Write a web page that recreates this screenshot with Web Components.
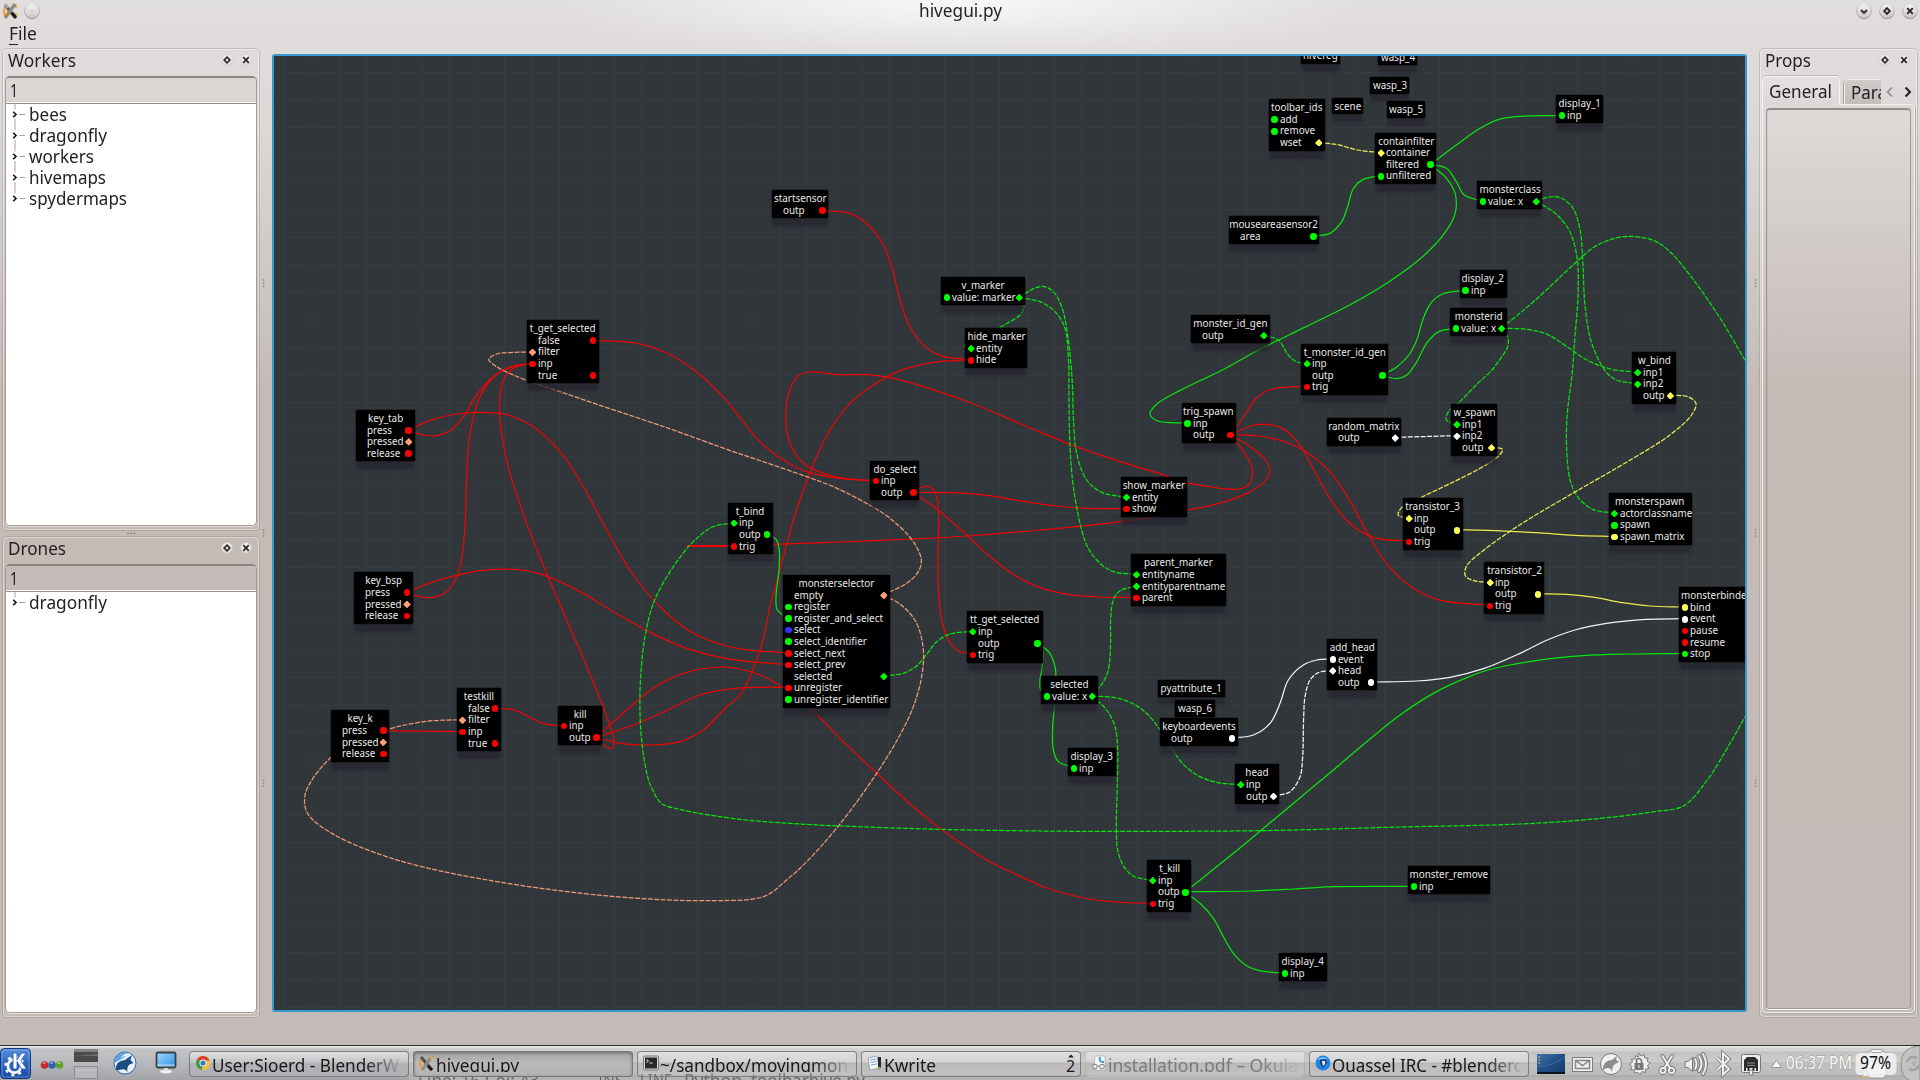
<!DOCTYPE html>
<html lang="en">
<head>
<meta charset="utf-8">
<title>hivegui.py</title>
<style>
html,body{margin:0;height:100%;overflow:hidden}
body{font-family:"Noto Sans","Open Sans",sans-serif;font-size:17.4px;color:#242120}
</style>
</head>
<body>
<hive-window></hive-window>
<script>
const define=(name,css,html,setup)=>customElements.define(name,class extends HTMLElement{
  connectedCallback(){
    if(this.shadowRoot)return;
    const root=this.attachShadow({mode:'open'});
    root.innerHTML=`<style>${css}</style>`+(typeof html==='function'?html(this):html);
    if(setup)setup(this,root);
  }
});

/* Text squeezed or stretched to a given advance width */
define('fit-text',
`:host{display:inline-block;white-space:nowrap;flex:none;line-height:1.2}
 span{display:inline-block;transform-origin:0 50%}`,
`<span><slot></slot></span>`,
(el,root)=>{
  const w=+el.getAttribute('w'),s=root.querySelector('span');
  const n=s.getBoundingClientRect().width;
  if(n)s.style.transform=`scaleX(${w/n})`;
  el.style.width=w+'px';
});

/* Round window and dock buttons */
const glyphs={
  down:'<path d="M6 8l3 3 3-3"/>',
  diamond:'<path d="M9 6.2L11.8 9 9 11.8 6.2 9z"/>',
  close:'<path d="M6.2 6.2l5.6 5.6M11.8 6.2l-5.6 5.6"/>',
  dot:'<path d="M8.6 9h.8" stroke-width="1" stroke="#777"/>'
};
define('round-button',
`:host{display:block;width:18px;height:18px;flex:none} svg{display:block}`,
el=>{
  const big=el.hasAttribute('big');
  return `<svg width="18" height="18" viewBox="0 0 18 18"><defs><linearGradient id="g" x1="0" y1="0" x2="0" y2="1"><stop offset="0" stop-color="#f6f5f4"/><stop offset="1" stop-color="${big?'#c9c5c3':'#dcd8d6'}"/></linearGradient></defs>
  ${big?'<circle cx="9" cy="9.6" r="7.6" fill="#8e8987" opacity=".75"/><circle cx="9" cy="9" r="7" fill="url(#g)"/>':'<circle cx="9" cy="9" r="5.4" fill="url(#g)" stroke="#cdc8c6" stroke-width=".6"/>'}
  <g fill="none" stroke="#2c2928" stroke-width="${big?1.9:1.7}">${glyphs[el.getAttribute('kind')]}</g></svg>`;
});

define('tool-icon',`:host{display:block;flex:none}svg{display:block}`,
`<svg width="15" height="16" viewBox="0 0 15 16"><path d="M2 5Q0 8 2 13" stroke="#f59a3c" stroke-width="2" fill="none"/><path d="M11 2q3 0 2 3M12 10l2 3" stroke="#e8b04a" stroke-width="2.4" fill="none"/><path d="M2 2L12 14" stroke="#55524a" stroke-width="3.4"/><path d="M12 1L2 15" stroke="#8b8a85" stroke-width="3.4"/><path d="M2 1l3 4" stroke="#aaa" stroke-width="3"/><path d="M3 13l2-3" stroke="#b78b25" stroke-width="2.6"/><path d="M9 10l4 5" stroke="#1d1c18" stroke-width="3"/></svg>`);

define('title-bar',
`:host{display:grid;grid-template-columns:1fr auto 1fr;align-items:center;height:21px;padding:0 1px 0 3px}
 .l,.r{display:flex;align-items:center}.l{gap:5px}.r{justify-content:flex-end;gap:5px}
 fit-text{margin-left:-1px}`,
`<div class="l"><tool-icon></tool-icon><round-button big kind="dot"></round-button></div>
 <fit-text w="83">hivegui.py</fit-text>
 <div class="r"><round-button big kind="down"></round-button><round-button big kind="diamond"></round-button><round-button big kind="close"></round-button></div>`);

define('menu-bar',
`:host{display:flex;height:27px;padding:0 0 2px 9px;align-items:center;box-sizing:border-box}
 u{text-decoration:none;box-shadow:0 -1px 0 #242120 inset;display:inline-block;height:22px}`,
`<fit-text w="28"><u>F</u>ile</fit-text>`);

/* Dock: titled frame */
define('dock-panel',
`:host{display:flex;flex-direction:column;box-sizing:border-box;border:1px solid rgba(120,110,105,.28);border-radius:5px;box-shadow:inset 0 0 0 1px rgba(255,255,255,.4);padding:0 2px 4px;min-width:0}
 header{display:flex;align-items:center;height:27px;padding:0 2px 0 3px;flex:none;box-sizing:border-box}
 fit-text{margin-top:-4px}
 .sp{flex:1}round-button{margin-left:1px;margin-top:-5px}`,
el=>`<header><fit-text w="${el.getAttribute('w')}">${el.getAttribute('label')}</fit-text><div class="sp"></div><round-button kind="diamond"></round-button><round-button kind="close"></round-button></header><slot></slot>`);

define('tree-view',
`:host{display:flex;flex-direction:column;flex:1;border:1px solid #a29b97;border-top:2px solid #8d8784;border-radius:5px;background:#fff;overflow:hidden;box-sizing:border-box;box-shadow:0 1px 0 #e4e0de}
 .h{height:24.5px;flex:none;background:var(--head);padding-left:4px;border-bottom:1px solid #96908d;box-shadow:inset 0 -1px 0 #fff;display:flex;align-items:center}
 .rows{padding-left:4px}
 .r{display:flex;align-items:center;height:21px}
 svg{flex:none;margin-right:4px}`,
el=>`<div class="h"><fit-text w="8">1</fit-text></div><div class="rows">`+el.getAttribute('items').split(',').map((t,i,a)=>{
  const [n,w]=t.split(':');
  return `<div class="r"><svg width="15" height="21" viewBox="0 0 15 21"><path d="M5 0V5.500M9.500 10.500H15${i<a.length-1?'M5 15V21':''}" stroke="#a5a19f" fill="none"/><path d="M3.200 7.700L6 10.500 3.200 13.300" stroke="#111" stroke-width="1.600" fill="none"/></svg><fit-text w="${w}">${n}</fit-text></div>`}).join('')+`</div>`);

define('split-grip',
`:host{display:flex;align-items:center;justify-content:center;flex:none}svg{display:block}`,
el=>el.hasAttribute('h')
?`<svg width="10" height="3"><path d="M1 1.500h2M4 1.500h2M7 1.500h2" stroke="#8d8683" stroke-width="1.500"/></svg>`
:`<svg width="3" height="10"><path d="M1.500 1v2M1.500 4v2M1.500 7v2" stroke="#9b9592" stroke-width="1.500"/></svg>`);

define('props-tabs',
`:host{display:flex;flex-direction:column;flex:1}
 .t{display:flex;height:28px;flex:none;align-items:flex-end}
 .a{width:78px;height:29px;box-sizing:border-box;border:1px solid #f6f5f4;border-bottom:0;border-radius:5px 5px 0 0;background:linear-gradient(#e4e2e0,#dbd8d6);display:flex;align-items:center;justify-content:center;margin-bottom:-1px;position:relative;z-index:1;box-shadow:0 -1px 0 #b9b3b0;flex:none}
 .a fit-text{margin-left:-1px}
 .b{width:37px;height:25px;margin-left:4px;overflow:hidden;border:1px solid #f0eeed;border-right:0;border-bottom:0;border-radius:5px 0 0 0;background:linear-gradient(#d0cac8,#c4bebb);display:flex;align-items:center;padding-left:6px;box-sizing:border-box;box-shadow:-1px 0 0 #a8a29f;flex:none}
 svg{margin-left:4px;margin-bottom:5px;flex:none}
 .p{flex:1;border:1px solid #f3f1f0;border-radius:0 4px 4px 4px;padding:3px;box-shadow:1px 1px 0 #b1aaa7}
 .q{height:100%;box-sizing:border-box;border:1px solid #a09996;border-top:2px solid #938d8a;border-radius:4px;box-shadow:inset 1px 0 0 rgba(0,0,0,.05),0 1px 0 #fff}`,
`<div class="t"><div class="a"><fit-text w="63">General</fit-text></div><div class="b"><fit-text w="36">Para</fit-text></div><svg width="28" height="14"><path d="M7 2.500L2.500 7 7 11.500" stroke="#8f8a87" stroke-width="1.600" fill="none"/><path d="M20.500 2.500L25 7 20.500 11.500" stroke="#1c1a19" stroke-width="1.900" fill="none"/></svg></div><div class="p"><div class="q"></div></div>`);

/* Graph node */
define('hive-node',
`:host{display:block;position:absolute;box-sizing:border-box;background:#000;border-radius:1px;color:#e9e9e9;font-size:11px;box-shadow:0 0 0 .5px rgba(0,0,0,.5),0 9px 3px -1px rgba(37,36,46,.75);padding-top:3px;line-height:11.600px;white-space:nowrap}
 .t{display:flex;justify-content:center;height:11.600px}
 .t span{display:block;transform:translateY(-.6px) scaleX(var(--sq));transform-origin:50% 50%}
 .r{display:flex;align-items:center;height:11.600px;padding:0 2.500px;gap:2px;position:relative}
 .r span{transform:translateY(-.6px) scaleX(var(--sq));transform-origin:0 50%;width:0;flex:1}
 i{width:6.600px;height:6.600px;border-radius:50%;background:var(--c);flex:none}
 i.d{border-radius:0;clip-path:polygon(50% -4%,104% 50%,50% 104%,-4% 50%);width:7.200px;height:7.200px;margin:0 -.3px}
 i.n{background:none}`,
el=>{
  const col={r:'#f00',g:'#0f0',o:'#ffa07a',y:'#ff5',w:'#fff',b:'#33f'};
  const rows=(el.getAttribute('ports')||'').split(',').filter(Boolean).map(p=>{
    const [spec,...rest]=p.split('|');
    const dots=spec.split('.').map(s=>s==='-'?'<i class="n"></i>':`<i class="${s[1]==='d'?'d':''}" style="--c:${col[s[0]]}"></i>`);
    return `<div class="r">${dots[0]}<span>${rest[0]}</span>${dots[1]||''}</div>`}).join('');
  return `<div class="t"><span>${el.getAttribute('label')}</span></div>${rows}`;
},
el=>{
  const n=(el.getAttribute('ports')||'').split(',').filter(Boolean).length;
  const [x,y,w]=el.getAttribute('box').split(' ');
  el.style.cssText=`left:${x-274}px;top:${y-56}px;width:${w}px;height:${16.5+11.6*n}px`;
});

const N=[
['hivereg','1301 47.1 38.8',''],['wasp_4','1378.4 48.800 39',''],['wasp_3','1370.2 77 38.8',''],['scene','1332.2 97.7 30.8',''],['wasp_5','1386.7 101 38.8',''],
['toolbar_ids','1268.5 99.3 56.2','g.-|add,g.-|remove,-.yd|wset'],
['containfilter','1375.3 132.7 61.2','yd.-|container,-.g|filtered,g.-|unfiltered'],
['display_1','1556.4 95.3 47','g.-|inp'],
['monsterclass','1477.3 181.3 64.8','g.gd|value: x'],
['mouseareasensor2','1229 216.3 90','-.g|area'],
['display_2','1459.5 270 47','g.-|inp'],
['monsterid','1450.4 308.3 57','g.gd|value: x'],
['monster_id_gen','1191.4 315.3 78.3','-.gd|outp'],
['t_monster_id_gen','1301.3 343.5 87','gd.-|inp,-.g|outp,r.-|trig'],
['trig_spawn','1181.5 403 54.6','g.-|inp,-.r|outp'],
['w_bind','1631.9 352.3 44.3','gd.-|inp1,gd.-|inp2,-.yd|outp'],
['w_spawn','1451.2 404.3 46.2','gd.-|inp1,wd.-|inp2,-.yd|outp'],
['random_matrix','1327 417.7 74','-.wd|outp'],
['transistor_3','1403.3 498.3 59.3','yd.-|inp,-.y|outp,r.-|trig'],
['monsterspawn','1608.6 493.3 83','gd.-|actorclassname,g.-|spawn,y.-|spawn_matrix'],
['transistor_2','1484.4 562.3 59.3','yd.-|inp,-.y|outp,r.-|trig'],
['monsterbinder','1679 587.3 73','y.-|bind,w.-|event,r.-|pause,r.-|resume,g.-|stop'],
['startsensor','771.7 190.3 56.6','-.r|outp'],
['v_marker','941 277.3 84','g.gd|value: marker'],
['hide_marker','965.3 328.3 61.6','gd.-|entity,r.-|hide'],
['t_get_selected','526.7 320.3 72','-.r|false,od.-|filter,r.-|inp,-.r|true'],
['key_tab','356 410 58.5','-.r|press,-.od|pressed,-.r|release'],
['key_bsp','354.3 572.4 58.5','-.r|press,-.od|pressed,-.r|release'],
['key_k','331 710.4 58','-.r|press,-.od|pressed,-.r|release'],
['testkill','456.7 688.3 44.3','-.r|false,od.-|filter,r.-|inp,-.r|true'],
['kill','558 705.7 44.3','r.-|inp,-.r|outp'],
['t_bind','728.3 502.8 44.3','gd.-|inp,-.g|outp,r.-|trig'],
['do_select','870.3 460.6 49','r.-|inp,-.r|outp'],
['monsterselector','782.7 575 107','-.od|empty,g.-|register,g.-|register_and_select,b.-|select,g.-|select_identifier,r.-|select_next,r.-|select_prev,-.gd|selected,r.-|unregister,g.-|unregister_identifier'],
['show_marker','1120.7 477 66','gd.-|entity,r.-|show'],
['parent_marker','1130.7 554.4 95.3','gd.-|entityname,gd.-|entityparentname,r.-|parent'],
['tt_get_selected','967 611.4 76','gd.-|inp,-.g|outp,r.-|trig'],
['selected','1041.3 676 56.7','g.gd|value: x'],
['display_3','1068.3 748 47.3','g.-|inp'],
['pyattribute_1','1158 680 67',''],['wasp_6','1175.4 700.3 39.2',''],
['keyboardevents','1160.3 718 77.7','-.w|outp'],
['head','1235 764.4 44.3','gd.-|inp,-.wd|outp'],
['add_head','1327 639 49.7','w.-|event,wd.-|head,-.w|outp'],
['t_kill','1147 860.3 44.3','gd.-|inp,-.g|outp,r.-|trig'],
['display_4','1279 953.4 47.6','g.-|inp'],
['monster_remove','1408 866 82','g.-|inp']];

/* Wire points live in scene tiles; a letter switches to that tile's origin and scale */
const T={A:[300,280,3,3],B:[740,460,3,3],C:[1140,50,2.529,3],D:[1140,340,2.529,3],E:[1000,600,3,3],F:[740,170,3,3],G:[0,0,.81667,.81667]};
const W=[
'r A 879,181 1000,188 1100,219 1190,276 1270,352 F 0,742 50,805 110,857 200,905 300,925 400,932',
'r A 325,450 370,465 410,467 450,452 490,410 530,345 580,290 630,262 697,251',
'r A 325,450 400,418 470,402 540,397 620,404 700,440 780,515 850,620 920,750 1000,885 1090,990 1180,1060 1280,1098 1360,1112 1440,1117 B 145,578',
'r A 320,937 370,952 410,950 450,925 480,860 495,740 500,590 510,460 540,350 590,283 640,258 697,251',
'r A 320,937 400,905 470,886 540,872 610,867 680,872 750,892 840,935 940,995 1050,1057 1160,1105 1280,1136 1440,1152 B 145,613',
'r A 889,1372 915,1398 935,1406 942,1395 935,1355 890,1230 800,1020 740,880 680,730 630,580 602,440 600,350 615,290 650,260 697,251',
'r A 889,1372 980,1290 1060,1225 1150,1180 1260,1161 B 0,627 60,645 125,680 207,741 300,835 410,940 520,1040 620,1120 740,1200 860,1258 E 140,864 250,894 350,906 458,911',
'r A 889,1372 1000,1335 1100,1292 1200,1245 1300,1226 B 60,682 145,682',
'r A 889,1372 960,1390 1050,1395 1140,1385 1210,1350 1280,1280 B 0,705 60,570 90,440 125,310 160,180 190,90 225,0 F 270,780 330,700 400,645 480,602 580,577 693,569',
'r D 229,284 262,335 282,380 283,415 268,440 235,448 180,441 118,428 F 1280,918 1150,878 1000,827 850,765 700,702 550,650 445,622 380,614 300,614 210,606 175,617 150,660 137,740 150,820 190,880 250,910 320,926 400,932',
'r D 229,284 285,325 318,360 328,392 315,425 270,460 200,490 118,511 B 1235,172 1100,190 900,210 685,228 515,237 300,246 98,253 60,255',
'R A 1160,798 1303,798',
'r B 519,97 640,98 740,106 850,124 950,138 1050,145 1160,146',
'r B 519,97 550,80 575,84 590,110 596,180 594,300 596,400 605,480 625,540 655,572 697,583',
'r B 519,97 600,155 680,225 750,290 820,343 900,383 990,404 1080,411 1190,412',
'r F 247,122 330,130 385,165 430,225 455,290 475,370 500,450 545,520 600,556 693,569',
'g- F 837,383 885,354 912,350 940,365 965,410 985,510 997,640 1000,740 1010,850 1040,930 1085,967 1160,982',
'g- F 837,383 900,395 945,425 975,475 985,560 987,700 990,830 1000,950 B 1025,210 1045,265 1080,310 1120,335 1190,343',
'g- F 837,383 852,410 840,435 810,455 775,474 700,505 673,527 693,535',
'g- B 430,647 490,640 530,618 560,583 590,545 630,522 697,514',
'o- B 430,404 500,370 535,335 544,300 520,245 450,175 370,125 280,80 200,50 55,0 A 1300,515 1100,443 900,376 780,335 710,312 640,285 590,260 566,238 590,222 640,217 697,216',
'o- B 430,404 490,440 530,490 550,570 545,650 520,740 480,825 410,940 300,1092 200,1205 142,1258 G 624,732 580,735.500 500,732 400,719 320,701 270,680 251,664 249,650 A 37,1498 93,1432 160,1385 267,1347 340,1330 400,1322 487,1319',
'r A 249,1352 487,1355',
'r A 585,1285 640,1289 690,1312 730,1331 792,1337',
'g B 80,223 108,238 118,270 116,340 108,410 112,450 145,475',
'g- A 1303,729 1240,740 1180,785 1120,860 1062,965 1035,1070 1022,1190 1020,1300 1027,1400 1045,1498 G 533,645 540,656 555,661 B 0,1078 150,1090 300,1098 600,1108 900,1113 E 300,694 780,692 1200,681 1560,672 G 1300,669 1350,663 1375,658 1395,636 1410,612 1426,584',
'g- C 914,835 1000,750 1100,640 1150,590 1200,565 1243,559 1300,572 1340,605 1400,690 1470,810 1536,943',
'g B 891,548 908,570 905,630 900,660 902,690 921,708',
'g B 891,548 930,580 945,620 948,650 944,735 938,800 940,870 955,905 1002,923',
'g- B 1056,708 1090,665 1105,630 1112,550 1112,480 1120,420 1140,392 1190,378',
'g- E 276,288 350,294 400,312 440,340 482,392 512,440 550,493 600,530 650,547 722,554',
'g- E 276,288 320,330 345,380 353,450 352,550 349,680 353,750 372,800 400,828 458,842',
'w E 696,414 760,405 810,370 840,310 865,240 910,195 950,180 1000,177',
'w- E 820,588 870,575 900,530 908,470 911,350 915,290 930,240 955,218 1000,212',
'w E 1111,246 1250,243 1350,232 1450,206 1560,160 D 1030,900 1100,870 1180,850 1280,838 1377,836',
'g E 555,876 700,760 850,635 1000,510 1100,425 1200,345 1300,280 1400,233 D 880,990 1000,962 1120,947 1240,942 1377,940',
'g E 555,875 750,873 880,867 1000,860 1241,859',
'g E 555,876 600,910 640,955 670,1010 700,1060 740,1097 780,1112 855,1120',
'y- C 452,278 500,284 550,300 610,308',
'g C 438,558 480,550 510,515 525,470 540,415 565,388 610,377',
'g C 735,343 800,285 860,235 900,211 950,200 1068,196',
'g C 735,343 775,355 800,395 820,435 869,454',
'g C 735,343 775,385 797,430 797,490 770,550 710,625 630,695 530,765 420,830 300,900 208,960 D 100,152 45,190 25,222 45,243 119,249',
'g- C 1002,454 1035,441 1065,444 1095,475 1113,540 1120,640 1125,760 1140,870 D 1175,90 1205,120 1258,131',
'g- C 1002,454 1050,490 1085,540 1105,620 1108,730 1100,860 D 1093,100 1080,230 1080,350 1090,430 1110,475 1145,508 1200,519',
'g- C 914,835 980,838 1030,853 1080,890 1130,930 1190,957 D 1258,97',
'g- C 914,835 930,860 930,890 915,920 D 890,90 850,135 803,192 780,215 775,240 801,253',
'g- C 313,857 350,870 375,915 395,935 423,941',
'g D 612,106 650,80 680,45 700,0 C 715,810 735,760 765,732 823,721',
'g D 612,106 650,116 675,105 700,65 C 725,880 755,845 800,835',
'r D 229,284 265,225 290,180 320,153 360,142 423,140',
'r D 229,284 280,258 320,253 360,265 400,308 440,390 480,475 530,550 590,592 680,604',
'r D 229,284 300,288 360,303 420,335 480,395 530,480 573,575 620,665 680,735 750,778 885,796',
'w- D 645,292 801,287',
'y- D 889,322 917,328 905,350 860,385 780,433 710,473 660,505 653,525 680,535',
'y D 801,569 880,571 1000,578 1100,586 1200,589',
'y- D 1340,166 1385,170 1406,190 1395,225 1340,285 1240,360 1100,456 960,555 870,630 825,680 823,708 845,722 885,727',
'y D 1006,761 1080,763 1150,772 1220,788 1290,798 1377,801'];

/* Centripetal Catmull-Rom spline through the wire's points */
function spline(p){
  const f=v=>v.toFixed(2),n=p.length;
  let d=`M${f(p[0][0])} ${f(p[0][1])}`;
  const D=(a,b)=>Math.max(Math.sqrt(Math.hypot(a[0]-b[0],a[1]-b[1])),1e-3);
  for(let i=0;i<n-1;i++){
    const a=p[i-1]||p[i],b=p[i],c=p[i+1],e=p[i+2]||c;
    const d1=D(a,b),d2=D(b,c),d3=D(c,e);
    const c1=[0,1].map(k=>i===0?b[k]+(c[k]-b[k])/3:(d1*d1*c[k]-d2*d2*a[k]+(2*d1*d1+3*d1*d2+d2*d2)*b[k])/(3*d1*(d1+d2)));
    const c2=[0,1].map(k=>i===n-2?c[k]-(c[k]-b[k])/3:(d3*d3*b[k]-d2*d2*e[k]+(2*d3*d3+3*d3*d2+d2*d2)*c[k])/(3*d3*(d3+d2)));
    d+=`C${f(c1[0])} ${f(c1[1])} ${f(c2[0])} ${f(c2[1])} ${f(c[0])} ${f(c[1])}`;
  }
  return d;
}
function wire(s){
  const [k,...tok]=s.split(' ');let t;const pts=[];
  for(const q of tok){if(T[q]){t=T[q];continue}const [x,y]=q.split(',').map(Number);pts.push([t[0]+x/t[2],t[1]+y/t[3]])}
  const c={r:'#ee0404',R:'#ee0404',g:'#08e40c',o:'#ef997a',y:'#ecec50',w:'#f4f4f4'}[k[0]];
  return `<path d="${spline(pts)}" stroke="${c}"${k[0]==='R'?' stroke-width="2"':''}${k[1]?' stroke-dasharray="5 1.4"':''}/>`;
}

define('node-canvas',
`:host{display:block;position:relative;box-sizing:border-box;border:2px solid #3a97c9;border-top-color:#3a9bd0;border-radius:3px;overflow:hidden;--sq:.895;
 background:#31363a;
 background-image:linear-gradient(90deg,#373c40 0 1px,transparent 1px),linear-gradient(#373c40 0 1px,transparent 1px);
 background-size:27.500px 27.500px;background-position:10px 16px;flex:none;box-shadow:inset 0 0 2px #1c4964}
 svg{display:block}`,
`<svg width="1471" height="956" viewBox="274 56 1471 956" fill="none" stroke-width="1.25">${W.map(wire).join('')}</svg>`
+N.map(([l,b,p])=>`<hive-node label="${l}" box="${b}" ports="${p}"></hive-node>`).join(''));

/* Taskbar */
const appIcons={
 chrome:'<circle cx="8" cy="8" r="7" fill="#f2c531"/><path d="M8 8L1.900 4.500A7 7 0 0 1 14.600 5.500H8z" fill="#d8402e"/><path d="M8 8L1.900 4.500A7 7 0 0 0 7 15z" fill="#3c9c4a"/><circle cx="8" cy="8" r="3.500" fill="#f4f4f4"/><circle cx="8" cy="8" r="2.600" fill="#3b78c9"/>',
 tools:'<path d="M2 5Q0 8 2 13" stroke="#f59a3c" stroke-width="2" fill="none"/><path d="M2 2L13 15" stroke="#55524a" stroke-width="3"/><path d="M13 1L3 15" stroke="#8b8a85" stroke-width="3"/><path d="M9 11l4 4" stroke="#1d1c18" stroke-width="3"/><path d="M11 2q3 0 2 3" stroke="#e8b04a" stroke-width="2" fill="none"/>',
 term:'<rect x=".5" y="1" width="15" height="14" rx="1" fill="#ddd" stroke="#777"/><rect x="2" y="2.500" width="12" height="11" fill="#26292b"/><path d="M3.500 4.500l2 1.500-2 1.500M6.500 8h3" stroke="#eee" fill="none"/>',
 write:'<path d="M1 3l9-2 2 12-9 2z" fill="#f5f8fb" stroke="#8a97a3" stroke-width=".8"/><path d="M3 5l6-1M3.500 7.500l6-1M4 10l6-1" stroke="#79a6d2"/><path d="M11 2h3v10l-1.500 3-1.500-3z" fill="#2a2a2a"/><path d="M11.500 12h2l-1 3z" fill="#d9b15b"/>',
 pdf:'<path d="M4 1h10v14H3z" fill="#f7f7f7" stroke="#aaa" stroke-width=".7"/><path d="M9 2q-2 5 4 5" stroke="#2b97e0" stroke-width="2" fill="none"/><circle cx="4" cy="11.500" r="2.300" fill="#eee" stroke="#777"/><circle cx="11" cy="11.500" r="2.300" fill="#eee" stroke="#777"/><path d="M6.500 11h2" stroke="#777"/>',
 irc:'<circle cx="8" cy="8" r="7.500" fill="#1c86e4"/><path d="M2 5a7 6 0 0 1 11-1q-6-1-11 1z" fill="#8cd0ff"/><path d="M5 5l6-1 1 4-4 5-3-4z" fill="#23427e"/><path d="M7 6l3 0v3l-2 2z" fill="#e8eef6"/>'};
define('task-button',
`:host{display:flex;align-items:center;box-sizing:border-box;width:220px;height:26px;border:1px solid rgba(95,95,95,.7);border-radius:4px;padding-left:5px;overflow:hidden;flex:none;position:relative;
  background:linear-gradient(rgba(255,255,255,.5),rgba(255,255,255,.12) 46%,rgba(150,150,150,.12) 48%,rgba(255,255,255,.1));color:#181818;font-size:18px}
 :host([on]){background:linear-gradient(#a5a4a3,#bbbab9 50%,#b4b3b2);box-shadow:inset 0 1px 3px #6d6c6b}
 :host([dim]){border-color:rgba(110,110,110,.2);color:#7b7a79}
 svg{flex:none;margin-right:1px;margin-top:-2px}
 .c{height:20px;overflow:hidden;flex:1;margin-top:-4px}
 :host([fade]) .c{-webkit-mask:linear-gradient(90deg,#000 80%,transparent 101%);mask:linear-gradient(90deg,#000 80%,transparent 101%);margin-right:6px}
 fit-text{position:relative;top:1px}
 .n{display:flex;flex-direction:column;align-items:center;width:12px;margin-right:3px}
 .n svg{margin:0}.n b{font-weight:400;font-size:16px;line-height:16px}`,
el=>`<svg width="16" height="16" viewBox="0 0 16 16">${appIcons[el.getAttribute('icon')]}</svg><div class="c"><fit-text w="${el.getAttribute('w')}"><slot></slot></fit-text></div>${el.hasAttribute('count')?`<div class="n"><svg width="6" height="4"><path d="M0 3.500L3 .5 6 3.500z" fill="#222"/></svg><b>${el.getAttribute('count')}</b></div>`:''}`);

define('system-tray',
`:host{display:flex;align-items:flex-start;flex:none}svg{display:block}`,
`<svg width="385" height="34" viewBox="1535 1046 385 34">
<defs><linearGradient id="s" x1="0" y1="0" x2="1" y2="1"><stop offset="0" stop-color="#4474ad"/><stop offset=".5" stop-color="#214d85"/><stop offset="1" stop-color="#163a69"/></linearGradient></defs>
<rect x="1537" y="1054" width="28" height="20" fill="url(#s)"/><path d="M1537 1066q12 2 28-9" stroke="#3b6ca8" fill="none"/><path d="M1538.500 1057h1.500M1538.500 1060h1.500M1538.500 1063h1.500" stroke="#e7e39a"/><rect x="1537" y="1072" width="28" height="2" fill="#0c1320"/>
<g fill="#efefef" stroke="#7b7b7b" stroke-width="1">
<rect x="1572.500" y="1057.500" width="20" height="14"/><path d="M1575.500 1060.500h14v8h-14zM1575.500 1060.500l7 5 7-5" fill="none" stroke="#858585" stroke-width="1.500"/>
<circle cx="1611" cy="1064" r="10.500"/><path d="M1603 1070q0-10 9-10l5-4-1 4 3 2-4 2q-3 2-3 8-1-4-4-4-3 0-5 2z" fill="#8b8b8b" stroke="none"/>
<path d="M1639 1053l2 3 3-1.500.5 3.500 3.500 0-1 3 3 2-2.500 2.500 1.500 3-3.500.5 0 3.500-3.500-1-2 3-2.500-2.500-3 1.500-.5-3.500-3.500-.5 1.500-3-2.500-2.500 3-2-1-3 3.500 0 .5-3.500 3 1.500z"/><rect x="1634.500" y="1063" width="9" height="7" fill="#777" stroke="none"/><path d="M1636.500 1063v-2a2.500 2.500 0 0 1 5 0v2" fill="none" stroke="#777" stroke-width="1.700"/><path d="M1639 1065v3" stroke="#eee"/>
</g>
<g fill="none" stroke-linecap="round"><path d="M1662.500 1056l7.500 12M1672 1056l-7.500 12" stroke="#777" stroke-width="4"/><circle cx="1663" cy="1070.500" r="2.600" stroke="#777" stroke-width="3.800"/><circle cx="1671.500" cy="1070.500" r="2.600" stroke="#777" stroke-width="3.800"/><path d="M1662.500 1056l7.500 12M1672 1056l-7.500 12" stroke="#efefef" stroke-width="2"/><circle cx="1663" cy="1070.500" r="2.600" stroke="#efefef" stroke-width="1.900"/><circle cx="1671.500" cy="1070.500" r="2.600" stroke="#efefef" stroke-width="1.900"/>
<path d="M1695 1059q3 5 0 10M1699 1056q5 8 0 15M1703 1054q6 10 0 20" stroke="#777" stroke-width="4"/><path d="M1695 1059q3 5 0 10M1699 1056q5 8 0 15M1703 1054q6 10 0 20" stroke="#efefef" stroke-width="2"/></g>
<path d="M1685 1061.500h3l4.500-4v14l-4.500-4h-3z" fill="#efefef" stroke="#777"/>
<path d="M1717 1058l12 11-6 5.500v-21l6 5.500-12 11" fill="none" stroke="#777" stroke-width="3.600"/><path d="M1717 1058l12 11-6 5.500v-21l6 5.500-12 11" fill="none" stroke="#efefef" stroke-width="2"/>
<rect x="1741.500" y="1054.500" width="19" height="18" rx="2" fill="#eee" stroke="#777"/><path d="M1744 1060l3-3h8l3 3v11h-2v-3h-1.500v3h-2v-3h-3v3h-2v-3H1746v3h-2z" fill="#2c2c2c"/><path d="M1747 1063h8M1747 1065.500h8" stroke="#888"/><path d="M1749.500 1070h3v5h-3z" fill="#eee" stroke="#777" stroke-width=".8"/>
<path d="M1771.500 1067.500l5-7.500 5 7.500z" fill="#fafafa" stroke="#999"/>
<text x="1786" y="1069" font-size="17.500" fill="#f9f9f9" stroke="#8f8e8d" stroke-width="1.200" stroke-opacity=".75" paint-order="stroke" textLength="66" lengthAdjust="spacingAndGlyphs">06:37 PM</text>
<rect x="1867" y="1051" width="19" height="27" rx="4" fill="#f1f1f1" stroke="#999"/><rect x="1871" y="1049.500" width="11" height="3" rx="1" fill="#f1f1f1" stroke="#aaa"/><path d="M1863 1072h5v6h-5z" fill="#f6f6f6" stroke="#aaa"/><path d="M1864 1076h3v2h-3z" fill="#e7a72a"/>
<rect x="1856" y="1053.500" width="40" height="21" rx="4" fill="#f4f4f4" fill-opacity=".8" stroke="#e9e9e9"/>
<text x="1860" y="1069" font-size="17.500" fill="#111" textLength="31" lengthAdjust="spacingAndGlyphs">97%</text>
<path d="M1920 1045.500q-19 2-19 18t12 18h7z" fill="#c3c2c1" stroke="#8f8e8d"/><path d="M1907 1062q3-7 10-4M1919 1065q-3 7-10 4" stroke="#a5a4a3" stroke-width="2.500" fill="none"/><circle cx="1914" cy="1063.500" r="2.500" fill="#b1b0af"/>
</svg>`);

define('task-bar',
`:host{display:flex;position:relative;height:35px;border-top:1px solid #2d2b2a;box-sizing:border-box;overflow:hidden;background:linear-gradient(#f2f2f2,#c2c3c5 3px,#b9bbbe 45%,#a2a4a7);flex:none}
 .launch{width:188.500px;flex:none}
 .launch svg{display:block}
 .right{position:absolute;left:409px;right:0;top:0;bottom:0;background:linear-gradient(#e8e8e8 0 1px,#d4d3d3 2px 5px,#c3c2c1 6px,#cfcecd 16px,#b5b4b3 17px,#c3c1c0 18px,#bdbbba 29px,#a5a3a2 30px,#b6b4b3 31px)}
 .tasks{display:flex;gap:4px;padding-top:4.500px;position:relative}
 .ghost{position:absolute;top:23.500px;color:#6b6967;font-size:17.400px}
 system-tray{position:absolute;right:0;top:0}`,
`<div class="right"></div>
<div class="launch"><svg width="188" height="34" viewBox="0 1046 188 34"><defs><linearGradient id="k" x1="0" y1="0" x2="0" y2="1"><stop offset="0" stop-color="#5c8fdb"/><stop offset=".5" stop-color="#2a62bd"/><stop offset="1" stop-color="#1a4ba0"/></linearGradient><linearGradient id="m" x1="0" y1="0" x2="1" y2="1"><stop offset="0" stop-color="#a4d9ff"/><stop offset="1" stop-color="#2c8ee6"/></linearGradient></defs>
<rect x=".5" y="1048.500" width="30" height="30" rx="4" fill="url(#k)" stroke="#123a80"/><rect x="2" y="1050" width="27" height="27" rx="3" fill="none" stroke="#9dc0f2" stroke-opacity=".5"/>
<circle cx="14.500" cy="1066" r="6.600" fill="none" stroke="#f4f7fc" stroke-width="2.800"/><circle cx="14.500" cy="1066" r="9" fill="none" stroke="#f4f7fc" stroke-width="2.600" stroke-dasharray="3 4.070"/><path d="M13 1053h4v7l4.500-7h4.500l-5 7.500 5.500 8.500h-4.700l-4.800-7.500v7.500H13z" fill="#fff" stroke="#2a62bd" stroke-width=".9"/>
<circle cx="44.500" cy="1065" r="3.800" fill="#c22a2a"/><circle cx="52" cy="1065" r="3.800" fill="#2c64ad"/><circle cx="59.500" cy="1065" r="3.800" fill="#64a02a"/><path d="M42.500 1063h3M50 1063h3M57.500 1063h3" stroke="#fff" stroke-opacity=".5" stroke-width="1.500"/>
<rect x="74" y="1049.500" width="24" height="12.500" fill="#4b4b49"/><rect x="74" y="1049.500" width="24" height="2.500" fill="#83827f"/><path d="M74 1056h24v-2z" fill="#6e6d6a"/><rect x="74.500" y="1066.500" width="23" height="12" fill="#b5b6b7" stroke="#8e8f90"/><path d="M75 1070h22" stroke="#cbcccd"/>
<circle cx="125" cy="1063" r="11" fill="#e8f1fa" stroke="#2666ac"/><path d="M114.500 1063a10.500 10.500 0 0 1 14-10q-6 1-8 5 3-2 6-2z" fill="#5fa4e0"/><path d="M116 1070q-1-9 9-10l7-5-1.500 5 3 3-4 1.500q-3 2-2 8-2-4-6-3t-5.500.5z" fill="#1e4d86"/>
<rect x="156.500" y="1052.500" width="19" height="15" rx="1.500" fill="url(#m)" stroke="#3d4042" stroke-width="1.800"/><path d="M157.500 1064h17v2.500h-17z" fill="#c7e5fb" opacity=".5"/><ellipse cx="166" cy="1071.500" rx="6.500" ry="2.200" fill="#f0f0f0" stroke="#a2a2a2" stroke-width=".5"/><path d="M164 1068h4v3h-4z" fill="#ddd"/></svg></div>
<fit-text class="ghost" style="left:417.500px" w="121">Line: 16 Col: 43</fit-text><fit-text class="ghost" style="left:598px" w="25">INS</fit-text><fit-text class="ghost" style="left:640px" w="32">LINE</fit-text><fit-text class="ghost" style="left:684px" w="58">Python</fit-text><fit-text class="ghost" style="left:751px" w="114">toolbarhive.py</fit-text>
<div class="tasks">
<task-button icon="chrome" w="187" fade>User:Sjoerd - BlenderW</task-button>
<task-button icon="tools" w="83" on>hivegui.py</task-button>
<task-button icon="term" w="188" fade>~/sandbox/movingmon</task-button>
<task-button icon="write" w="52" count="2">Kwrite</task-button>
<task-button icon="pdf" w="190" dim fade>installation.pdf – Okula</task-button>
<task-button icon="irc" w="190" fade>Quassel IRC - #blenderc</task-button>
</div><system-tray></system-tray>`);

define('hive-window',
`:host{display:flex;flex-direction:column;width:1920px;height:1080px;overflow:hidden;
 background:radial-gradient(ellipse 420px 60px at 961px 0,rgba(255,255,255,.8),rgba(255,255,255,.35) 55%,transparent),linear-gradient(#e0dedd,#dcd8d6 130px,#c4bbb7 390px,#c4bbb8)}
 main{display:flex;flex:1;padding:0 2px 27px;min-height:0;box-sizing:border-box}
 .left{display:flex;flex-direction:column;width:258px;flex:none}
 .left dock-panel{height:483px}
 .left dock-panel+split-grip{height:5px}
 .left dock-panel:last-child{flex:1;height:auto}
 .gl,.gr{display:flex;flex-direction:column;justify-content:space-between;flex:none;padding:230px 0;box-sizing:border-box}
 .gl{width:6px;margin-right:6px}.gr{width:12px;align-items:flex-end;padding-right:2.500px}
 node-canvas{width:1475px;height:958px;margin-top:6px}
 .props{flex:1}`,
`<title-bar></title-bar><menu-bar></menu-bar>
<main>
<div class="left">
<dock-panel label="Workers" w="68"><tree-view style="--head:#dad6d3" items="bees:38,dragonfly:78,workers:65,hivemaps:77,spydermaps:98"></tree-view></dock-panel>
<split-grip h></split-grip>
<dock-panel label="Drones" w="58"><tree-view style="--head:#c4bab7" items="dragonfly:78"></tree-view></dock-panel>
</div>
<div class="gl"><split-grip></split-grip><split-grip></split-grip><split-grip></split-grip></div>
<node-canvas></node-canvas>
<div class="gr"><split-grip></split-grip><split-grip></split-grip><split-grip></split-grip></div>
<dock-panel class="props" label="Props" w="46"><props-tabs></props-tabs></dock-panel>
</main>
<task-bar></task-bar>`);
</script>
</body>
</html>
